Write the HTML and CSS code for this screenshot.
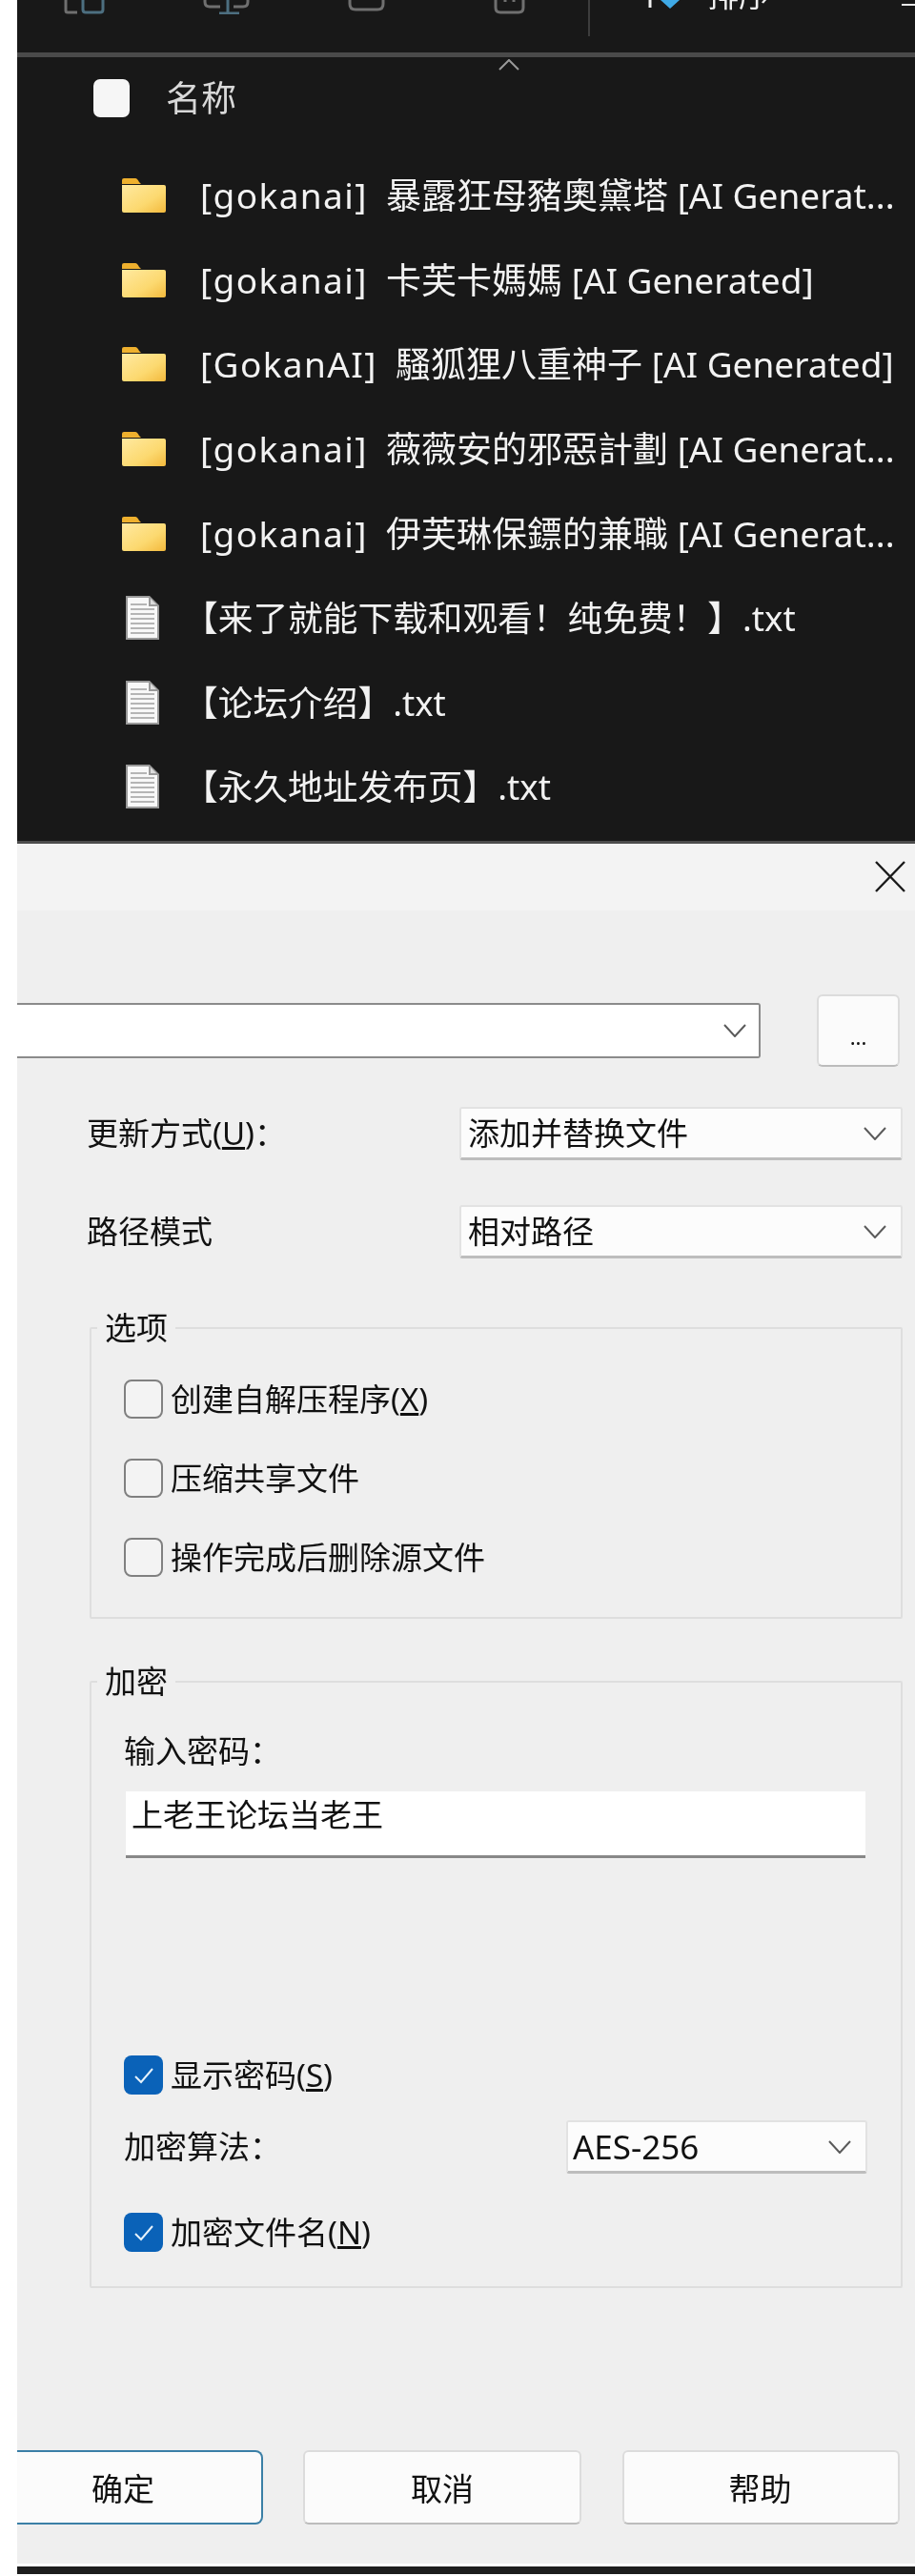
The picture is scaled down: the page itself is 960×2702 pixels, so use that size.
FILE: index.html
```html
<!DOCTYPE html>
<html lang="zh">
<head>
<meta charset="utf-8">
<title>压缩文件</title>
<link rel="stylesheet" href="styles.css">
</head>
<body>
<div class="screen">
  <section class="explorer">
    <div class="toolbar">
      <svg class="tb-1" viewBox="0 0 43 15"><path d="M2 0V11Q2 13 4 13H14" class="st-gray"/><path d="M20 0V10Q20 13 23 13H38Q41 13 41 10V0" class="st-blue"/></svg>
      <svg class="tb-2" viewBox="0 0 49 15"><path d="M2 0V2Q2 7 7 7H18M32 7H42Q47 7 47 2V0" class="st-gray"/><path d="M26 0V13M17 14H38" class="st-blue"/></svg>
      <svg class="tb-3" viewBox="0 0 39 12"><path d="M2 0V4Q2 10 8 10H31Q37 10 37 4V0" class="st-gray"/></svg>
      <svg class="tb-4" viewBox="0 0 33 15"><path d="M2 0V8Q2 13 7 13H26Q31 13 31 8V0" class="st-gray"/><path d="M12 0V2M21 0V2" class="st-gray"/></svg>
      <span class="tb-divider"></span>
      <svg class="tb-sort" viewBox="0 0 33 9"><path d="M2 0V8" class="st-white"/><path d="M13 0H33L23 9Z" class="fill-blue"/></svg>
      <span class="tb-label">排序</span>
      <span class="tb-dash"></span>
    </div>
    <div class="list-head">
      <svg class="sort-caret" viewBox="0 0 22 12"><path d="M1 11L11 1L21 11"/></svg>
      <span class="head-check"></span>
      <span class="head-name">名称</span>
    </div>
    <ul class="files">
      <li class="row folder"><svg class="ic-folder" viewBox="0 0 47 36"><use href="#folder"/></svg><span><b class="tag">[gokanai]</b>  暴露狂母豬奧黛塔 [AI Generat...</span></li>
      <li class="row folder"><svg class="ic-folder" viewBox="0 0 47 36"><use href="#folder"/></svg><span><b class="tag">[gokanai]</b>  卡芙卡媽媽 [AI Generated]</span></li>
      <li class="row folder"><svg class="ic-folder" viewBox="0 0 47 36"><use href="#folder"/></svg><span><b class="tag">[GokanAI]</b>  騷狐狸八重神子 [AI Generated]</span></li>
      <li class="row folder"><svg class="ic-folder" viewBox="0 0 47 36"><use href="#folder"/></svg><span><b class="tag">[gokanai]</b>  薇薇安的邪惡計劃 [AI Generat...</span></li>
      <li class="row folder"><svg class="ic-folder" viewBox="0 0 47 36"><use href="#folder"/></svg><span><b class="tag">[gokanai]</b>  伊芙琳保鏢的兼職 [AI Generat...</span></li>
      <li class="row txt"><svg class="ic-file" viewBox="0 0 35 46"><use href="#file"/></svg><span>【来了就能下载和观看！纯免费！】.txt</span></li>
      <li class="row txt"><svg class="ic-file" viewBox="0 0 35 46"><use href="#file"/></svg><span>【论坛介绍】.txt</span></li>
      <li class="row txt"><svg class="ic-file" viewBox="0 0 35 46"><use href="#file"/></svg><span>【永久地址发布页】.txt</span></li>
    </ul>
  </section>

  <section class="dialog">
    <header class="titlebar">
      <svg class="close" viewBox="0 0 32 33"><path d="M1 1L31 32M31 1L1 32"/></svg>
    </header>
    <div class="dialog-body">
      <div class="path-row">
        <div class="path-box"><svg class="chev" viewBox="0 0 24 14"><use href="#chev"/></svg></div>
        <button class="btn browse">...</button>
      </div>
      <div class="form-row first">
        <span class="label">更新方式(<u>U</u>)：</span>
        <div class="select wide"><span>添加并替换文件</span><svg class="chev" viewBox="0 0 24 14"><use href="#chev"/></svg></div>
      </div>
      <div class="form-row second">
        <span class="label">路径模式</span>
        <div class="select wide"><span>相对路径</span><svg class="chev" viewBox="0 0 24 14"><use href="#chev"/></svg></div>
      </div>

      <fieldset class="group options">
        <legend>选项</legend>
        <div class="check"><span class="box"></span><span>创建自解压程序(<u>X</u>)</span></div>
        <div class="check"><span class="box"></span><span>压缩共享文件</span></div>
        <div class="check"><span class="box"></span><span>操作完成后删除源文件</span></div>
      </fieldset>

      <fieldset class="group crypt">
        <legend>加密</legend>
        <div class="pw-label">输入密码：</div>
        <div class="pw-input">上老王论坛当老王</div>
        <div class="check show-pw"><span class="box on"><svg viewBox="0 0 22 18"><use href="#tick"/></svg></span><span>显示密码(<u>S</u>)</span></div>
        <div class="algo-row">
          <span class="label">加密算法：</span>
          <div class="select algo"><span>AES-256</span><svg class="chev" viewBox="0 0 24 14"><use href="#chev"/></svg></div>
        </div>
        <div class="check enc-name"><span class="box on"><svg viewBox="0 0 22 18"><use href="#tick"/></svg></span><span>加密文件名(<u>N</u>)</span></div>
      </fieldset>

      <div class="actions">
        <button class="btn ok">确定</button>
        <button class="btn cancel">取消</button>
        <button class="btn help">帮助</button>
      </div>
    </div>
    <div class="bottom-bar"></div>
  </section>
</div>

<svg class="defs" width="0" height="0" aria-hidden="true">
  <defs>
    <linearGradient id="fgrad" x1="0" y1="0" x2="1" y2="1">
      <stop offset="0" stop-color="#ffe9a0"/>
      <stop offset="0.6" stop-color="#fcd970"/>
      <stop offset="1" stop-color="#f3b93c"/>
    </linearGradient>
    <symbol id="folder" viewBox="0 0 47 36">
      <path d="M1 2Q1 0 3 0H15Q17 0 19 4L21 6H2L1 6Z" fill="#eeb02e"/>
      <path d="M1 7H45Q47 7 47 9V34Q47 36 45 36H3Q1 36 1 34Z" fill="url(#fgrad)"/>
    </symbol>
    <symbol id="file" viewBox="0 0 35 46">
      <path d="M0 0H25L35 10V46H0Z" fill="#9a9a9a"/>
      <path d="M2 2H24V11H33V44H2Z" fill="#f8f8f8"/>
      <path d="M26 3L32 9H26Z" fill="#dcdcdc"/>
      <path d="M5 9H22M5 14H30M5 19H30M5 24H30M5 29H30M5 34H30M5 39H30" stroke="#b5b5b5" stroke-width="2" fill="none"/>
    </symbol>
    <symbol id="chev" viewBox="0 0 24 14">
      <path d="M1 1L12 13L23 1" fill="none" stroke="#5a5a5a" stroke-width="2"/>
    </symbol>
    <symbol id="tick" viewBox="0 0 22 18">
      <path d="M2 10L8 16L20 2" fill="none" stroke="#e6f2fb" stroke-width="2"/>
    </symbol>
  </defs>
</svg>
</body>
</html>
```

FILE: styles.css
```css
* { box-sizing: border-box; }
html, body { margin: 0; padding: 0; background: #ffffff; }
body {
  width: 960px;
  height: 2702px;
  overflow: hidden;
  font-family: "Noto Sans", "Noto Sans CJK SC", sans-serif;
}
.screen { margin-left: 18px; width: 942px; filter: blur(0.4px); }
.defs { position: absolute; }

/* Explorer */
.explorer {
  height: 885px;
  background: #181818;
  border-bottom: 3px solid #4c4c4c;
  color: #f2f2f2;
  overflow: hidden;
}
.toolbar {
  height: 60px;
  display: flex;
  align-items: flex-start;
  padding-left: 49px;
  border-bottom: 5px solid #4a4a4a;
  overflow: hidden;
}
.toolbar svg { display: block; flex: none; }
.st-gray, .st-blue, .st-white { fill: none; stroke-width: 3; }
.st-gray { stroke: #6f6f6f; }
.st-blue { stroke: #4d6f80; }
.st-white { stroke: #f0f0f0; }
.fill-blue { fill: #3fa9e6; }
.tb-1 { width: 43px; height: 15px; }
.tb-2 { width: 49px; height: 15px; margin-left: 103px; }
.tb-3 { width: 39px; height: 12px; margin-left: 103px; }
.tb-4 { width: 33px; height: 15px; margin-left: 114px; }
.tb-divider { width: 2px; height: 38px; margin-left: 66px; background: #3d3d3d; flex: none; }
.tb-sort { width: 33px; height: 9px; margin-left: 61px; }
.tb-label {
  margin-left: 29px;
  margin-top: -22px;
  font-size: 33px;
  line-height: 33px;
  color: #f0f0f0;
}
.tb-dash { width: 14px; height: 2px; margin-left: auto; margin-top: 4px; background: #e8e8e8; flex: none; }

.list-head {
  height: 101px;
  position: relative;
  display: flex;
  align-items: flex-start;
  padding: 23px 0 0 80px;
}
.sort-caret {
  position: absolute;
  left: 505px;
  top: 2px;
  width: 22px;
  height: 12px;
  fill: none;
  stroke: #9a9a9a;
  stroke-width: 2;
}
.head-check {
  width: 38px;
  height: 40px;
  border-radius: 7px;
  background: #f6f6f6;
  flex: none;
}
.head-name {
  margin-left: 38px;
  font-size: 37px;
  line-height: 40px;
  color: #d8d8d8;
}

.files { list-style: none; margin: 0; padding: 0; }
.row {
  height: 88.6px;
  display: flex;
  align-items: center;
  padding-left: 109px;
  font-size: 37px;
  line-height: 48px;
  white-space: pre;
}
.tag { font-weight: 400; letter-spacing: 1.4px; }
.ic-folder { width: 47px; height: 36px; flex: none; }
.ic-file { width: 35px; height: 46px; margin-left: 5px; margin-right: 7px; flex: none; }
.folder span { margin-left: 36px; }
.txt span { margin-left: 18px; font-size: 36.7px; }

/* Dialog */
.dialog { color: #111111; font-size: 33px; }
.titlebar {
  height: 70px;
  background: #f3f3f3;
  display: flex;
  justify-content: flex-end;
  padding: 18px 10px 0 0;
}
.close { width: 32px; height: 33px; fill: none; stroke: #1a1a1a; stroke-width: 2.4; }
.dialog-body {
  height: 1734px;
  background: #efefef;
  padding: 88px 16px 0 0;
}
.path-row { display: flex; align-items: center; height: 76px; }
.path-box {
  width: 780px;
  height: 58px;
  background: #ffffff;
  border: 2px solid #8b8b8b;
  border-left: 0;
  border-radius: 0 3px 3px 0;
  display: flex;
  align-items: center;
  justify-content: flex-end;
  padding-right: 13px;
}
.chev { width: 24px; height: 14px; flex: none; }
.btn {
  font: inherit;
  color: #111111;
  background: #fbfbfb;
  border: 2px solid #dcdcdc;
  border-bottom-color: #bcbcbc;
  border-radius: 6px;
  padding: 0;
}
.browse {
  width: 87px;
  height: 76px;
  margin-left: 59px;
  padding-top: 12px;
  font-size: 22px;
}
.form-row { display: flex; align-items: center; height: 56px; padding-left: 73px; }
.form-row.first { margin-top: 42px; }
.form-row.second { margin-top: 47px; }
.label { line-height: 40px; }
.select {
  height: 56px;
  background: #fcfcfc;
  border: 2px solid #e2e2e2;
  border-bottom: 3px solid #bdbdbd;
  border-radius: 3px;
  display: flex;
  align-items: center;
  justify-content: space-between;
  line-height: 40px;
}
.select.wide { width: 465px; margin-left: auto; margin-right: -3px; padding: 0 15px 0 7px; }

.group {
  margin: 0 -3px 0 76px;
  padding: 0;
  border: 2px solid #dedede;
  border-radius: 2px;
  min-width: 0;
}
.group legend {
  margin-left: -28px;
  padding: 0 8px;
  font-size: 33px;
  line-height: 33px;
}
.options { margin-top: 56px; height: 322px; padding: 38px 0 0 34px; }
.crypt { margin-top: 49px; height: 653px; padding: 40px 0 0 34px; }
.check {
  display: flex;
  align-items: center;
  height: 41px;
  line-height: 40px;
  margin-bottom: 42px;
}
.box {
  width: 41px;
  height: 41px;
  border: 2px solid #808080;
  border-radius: 8px;
  margin-right: 8px;
  background: #f3f3f3;
  flex: none;
}
.box.on {
  border: 0;
  background: #0a62b8;
  display: flex;
  align-items: center;
  justify-content: center;
}
.box.on svg { width: 22px; height: 18px; }
.pw-label { line-height: 34px; }
.pw-input {
  width: 776px;
  height: 70px;
  margin: 25px 0 0 2px;
  padding: 5px 6px 0;
  line-height: 40px;
  background: #ffffff;
  border-bottom: 3px solid #888888;
}
.check.show-pw { margin: 207px 0 0; }
.algo-row { display: flex; align-items: center; justify-content: space-between; width: 780px; margin-top: 27px; height: 56px; }
.select.algo { width: 316px; padding: 0 15px 0 5px; font-size: 35px; }
.check.enc-name { margin: 41px 0 0; }
.actions { display: flex; height: 78px; margin-top: 170px; }
.ok {
  width: 258px;
  border: 2px solid #3b7fa6;
  border-left: 0;
  border-radius: 0 8px 8px 0;
  padding-right: 34px;
}
.cancel { width: 292px; margin-left: 42px; }
.help { width: 291px; margin-left: 43px; padding-right: 2px; }
.bottom-bar { height: 13px; border-top: 3px solid #ffffff; background: #1d1d1d; border-bottom: 2px solid #ffffff; }
```
